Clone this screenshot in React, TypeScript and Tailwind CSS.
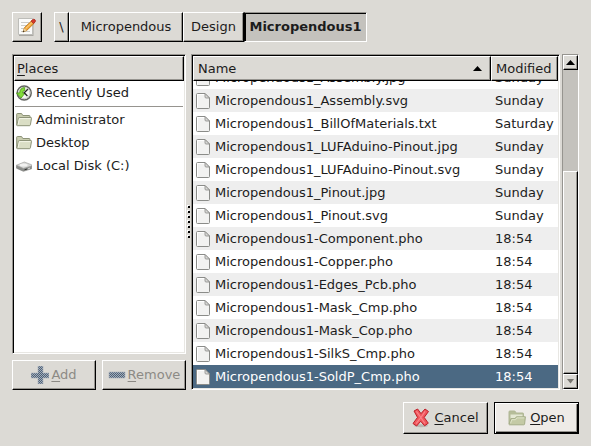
import { useLayoutEffect, useRef } from "react";

const raised =
  "border border-t-white border-l-white border-r-black border-b-black bg-[#dcdad5] shadow-[inset_-1px_-1px_0_#96948f]";

const sunken =
  "border border-t-[#96948f] border-l-[#96948f] border-r-white border-b-white p-px shadow-[inset_1px_1px_0_#000,inset_-1px_-1px_0_#e8e7e3]";

const files = [
  { name: "Micropendous1_Assembly.jpg", modified: "Sunday" },
  { name: "Micropendous1_Assembly.svg", modified: "Sunday" },
  { name: "Micropendous1_BillOfMaterials.txt", modified: "Saturday" },
  { name: "Micropendous1_LUFAduino-Pinout.jpg", modified: "Sunday" },
  { name: "Micropendous1_LUFAduino-Pinout.svg", modified: "Sunday" },
  { name: "Micropendous1_Pinout.jpg", modified: "Sunday" },
  { name: "Micropendous1_Pinout.svg", modified: "Sunday" },
  { name: "Micropendous1-Component.pho", modified: "18:54" },
  { name: "Micropendous1-Copper.pho", modified: "18:54" },
  { name: "Micropendous1-Edges_Pcb.pho", modified: "18:54" },
  { name: "Micropendous1-Mask_Cmp.pho", modified: "18:54" },
  { name: "Micropendous1-Mask_Cop.pho", modified: "18:54" },
  { name: "Micropendous1-SilkS_Cmp.pho", modified: "18:54" },
  { name: "Micropendous1-SoldP_Cmp.pho", modified: "18:54" },
];

function FileIcon() {
  return (
    <svg width="14" height="18" viewBox="0 0 14 18" className="shrink-0" aria-hidden="true">
      <path d="M.5 2.5q0-1 1-1H9l4.500 4.500v9.500q0 1-1 1h-11q-1 0-1-1z" fill="#f2f2f1" stroke="#8b8c89" strokeLinejoin="round" />
      <path d="M1.500 15.500v-13h7" fill="none" stroke="#fff" />
      <path d="M9 1.500v3.500q0 1 1 1h3.500z" fill="#d8d8d6" stroke="#8b8c89" strokeWidth=".8" strokeLinejoin="round" />
    </svg>
  );
}

function FolderIcon() {
  return (
    <svg width="16" height="16" viewBox="0 0 16 16" className="shrink-0" aria-hidden="true">
      <path d="M.7 13V2.200q0-.7.7-.7h4.200l1.200 2h6.500q.7 0 .7.7V6" fill="#c9cdaf" stroke="#8d9378" />
      <path d="M.8 13.500 2.400 6.400q.2-.9 1-.9h11.500q.7 0 .6.8l-1.100 6.500q-.2.9-1 .9H1.500q-.6 0-.7-.2z" fill="#dadec5" stroke="#8d9378" />
      <path d="M2.200 12.500 3.400 6.600h11" fill="none" stroke="#f3f5e6" />
    </svg>
  );
}

function OpenFolderIcon() {
  return (
    <svg width="18" height="18" viewBox="0 0 18 18" className="shrink-0" aria-hidden="true">
      <path d="M1 15V2.800q0-.8.8-.8h5l1.400 2h6.600q.7 0 .7.8V9" fill="#b6bd99" stroke="#b0b795" />
      <path d="M2.500 5.500h12v4h-12z" fill="#e5e8d4" />
      <path d="M1 15.500 3 9.600h4L8.400 7.800h9L16.600 15q-.1.800-.9.800H1.500z" fill="#c4caa5" stroke="#a5ad88" />
      <path d="M2.600 14.200 3.800 10.700h3.800L8.900 8.900h7.400" fill="none" stroke="#dfe4c9" />
    </svg>
  );
}

function RecentIcon() {
  return (
    <svg width="16" height="16" viewBox="0 0 16 16" className="shrink-0" aria-hidden="true">
      <circle cx="8.2" cy="8" r="7" fill="#f5f5f3" stroke="#62645f" strokeWidth="1.5" />
      <circle cx="8.2" cy="8" r="5.6" fill="none" stroke="#c9cac7" />
      <path d="M8.500 2.600Q3.800 3.100 3.700 8H.5l4.600 5 4-5H6.500q0-2.300 2.300-2.600z" fill="#83dc3c" stroke="#4b9d12" strokeWidth=".8" />
      <path d="m11.800 4.200-3.600 3.600 3.200 3.200" fill="none" stroke="#222" strokeWidth="1.3" />
    </svg>
  );
}

function DiskIcon() {
  return (
    <svg width="16" height="16" viewBox="0 0 16 16" className="shrink-0" aria-hidden="true">
      <path d="M.5 7.400v2.800l6.800 3.100 8.200-2.500V8z" fill="#8c8e8b" stroke="#787a77" strokeWidth=".6" />
      <path d="M.5 7.200 8.300 4l7.200 2.700v1.400L7.400 10.500z" fill="#d5d6d4" stroke="#9a9b98" strokeWidth=".6" />
      <ellipse cx="7.6" cy="7" rx="4" ry="1.5" fill="#f2f2f1" />
      <path d="m8.500 11.800 2.600-.8" stroke="#333" />
      <path d="m12.200 10.700 1.800-.6" stroke="#ddd" />
    </svg>
  );
}

function EditIcon() {
  return (
    <svg width="20" height="20" viewBox="0 0 20 20" aria-hidden="true">
      <path d="M2 3h14.500v16H2z" fill="#aaa8a3" />
      <path d="M1.500 1.500h14v16h-14z" fill="#fbfbfa" stroke="#bdbdb9" />
      <path d="M4 5.500h8M4 8.500h6M4 11.500h3M4 14.500h9" stroke="#cbcbc8" />
      <path d="m6 15 1.500-4.400 7.400-7.100 2.500 2.500-7.600 7.400z" fill="#f1a53b" stroke="#b67213" strokeWidth=".8" />
      <path d="m8.800 11.500 6.800-6.600" stroke="#ffd98d" />
      <path d="m14.100 4.200 1.700-1.600q1-.9 2.200.2 1 1.200.1 2.100l-1.600 1.700z" fill="#d53a2b" stroke="#a9281d" strokeWidth=".8" />
      <path d="m6 15 1.300-3.800 2.300 2.300z" fill="#e7cfa0" />
      <path d="m5.800 15.200.6-1.800 1.100 1.100z" fill="#222" />
    </svg>
  );
}

function CancelIcon() {
  return (
    <svg width="18" height="20" viewBox="0 0 18 20" className="shrink-0" aria-hidden="true">
      <ellipse cx="9" cy="17.8" rx="7" ry="1.5" fill="#b9b7b2" />
      <path d="M2 3 5.600 1 9 5.600 13 1l3.500 2.500-4.300 5.900 4.100 5.800-3.700 2.600L8.700 13.300 4.600 18 1 15.500l4.500-6.100z" fill="#f0575d" stroke="#bc2029" strokeLinejoin="round" />
      <path d="m4.400 3.300 4.500 6.200 4.200-6.100M8.800 9.600l-4.700 6.100M8.900 9.600l4.100 5.900" fill="none" stroke="#fb8388" strokeWidth="1.2" />
    </svg>
  );
}

function DitheredIcon({ kind }: { kind: "add" | "remove" }) {
  const id = `dither-${kind}`;
  return (
    <svg width="18" height="18" viewBox="0 0 18 18" className="shrink-0" aria-hidden="true">
      <defs>
        <pattern id={id} width="2" height="2" patternUnits="userSpaceOnUse">
          <path d="M0 0h2v2H0z" fill="#a3adb8" />
          <path d="M0 0h1v1H0zM1 1h1v1H1z" fill="#4c6078" />
        </pattern>
      </defs>
      <path
        d={kind === "add" ? "M7 0h5v7h6v5h-6v6H7v-6H0V7h7z" : "M1 6h16v6H1z"}
        fill={`url(#${id})`}
        stroke="#a8b0ba"
        strokeWidth=".6"
      />
    </svg>
  );
}

function Arrow({ down = false }: { down?: boolean }) {
  return (
    <svg width="9" height="5" viewBox="0 0 9 5" aria-hidden="true">
      <path d={down ? "M1 0h7L4.500 4.500z" : "M0 5 4.500 0 9 5z"} fill={down ? "#77756f" : "#000"} />
    </svg>
  );
}

function PathBar() {
  return (
    <nav aria-label="Folder path" className="flex h-[30px] gap-3">
      <button aria-label="Type a file name" className={`${raised} flex w-[30px] items-center justify-center`}>
        <EditIcon />
      </button>
      <div className="flex">
        <button className={`${raised} w-[15px]`}>\</button>
        <button className={`${raised} w-[114px]`}>Micropendous</button>
        <button className={`${raised} w-[61px]`}>Design</button>
        <button
          aria-current="page"
          className="w-[123px] border border-t-[#96948f] border-l-black border-r-white border-b-white bg-[#c4c2bd] font-bold shadow-[inset_1px_1px_0_#000]"
        >
          Micropendous1
        </button>
      </div>
    </nav>
  );
}

function Place({ icon, label }: { icon: React.ReactNode; label: string }) {
  return (
    <li>
      <button className="flex h-[23px] w-full items-center gap-1 px-0.5 text-left">
        {icon}
        {label}
      </button>
    </li>
  );
}

function Places() {
  return (
    <section className="flex w-[174px] shrink-0 flex-col gap-1.5">
      <div className={`${sunken} flex-1 bg-white`}>
        <h2 className={`${raised} h-[25px] px-0.5 leading-6`}>
          <u className="underline-offset-2">P</u>laces
        </h2>
        <ul>
          <Place icon={<RecentIcon />} label="Recently Used" />
          <li role="separator" className="mx-px mt-0.5 mb-px border-t border-[#96948f]" />
          <Place icon={<FolderIcon />} label="Administrator" />
          <Place icon={<FolderIcon />} label="Desktop" />
          <Place icon={<DiskIcon />} label="Local Disk (C:)" />
        </ul>
      </div>
      <div className="grid h-[30px] grid-cols-2 gap-1.5 text-[#8c8a85] [text-shadow:1px_1px_0_#fff]">
        <button disabled className={`${raised} flex items-center justify-center gap-0.5`}>
          <DitheredIcon kind="add" />
          <span><u className="underline-offset-2">A</u>dd</span>
        </button>
        <button disabled className={`${raised} flex items-center justify-center gap-0.5`}>
          <DitheredIcon kind="remove" />
          <span><u className="underline-offset-2">R</u>emove</span>
        </button>
      </div>
    </section>
  );
}

function FileTable() {
  const pane = useRef<HTMLDivElement>(null);
  useLayoutEffect(() => {
    if (pane.current) pane.current.scrollTop = pane.current.scrollHeight;
  }, []);
  return (
    <div className={`${sunken} min-w-0 flex-1`}>
      <div ref={pane} className="h-[332px] overflow-hidden bg-white">
        <table className="w-full table-fixed border-separate border-spacing-0 text-left">
          <thead className="sticky top-0 z-10">
            <tr className="h-[25px]">
              <th className={`${raised} px-1 py-0 font-normal`}>
                <div className="flex items-center justify-between pr-1">
                  Name
                  <Arrow />
                </div>
              </th>
              <th className={`${raised} w-[67px] px-1 py-0 font-normal`}>Modified</th>
            </tr>
          </thead>
          <tbody>
            {files.map((file, i) => {
              const selected = i === files.length - 1;
              return (
                <tr
                  key={file.name}
                  aria-selected={selected}
                  className={`h-[23px] ${selected ? "bg-[#4b6983] text-white" : i % 2 ? "bg-[#eeeeee]" : "bg-white"}`}
                >
                  <td className="p-0 pl-[3px]">
                    <div className="flex items-center gap-[5px]">
                      <FileIcon />
                      {file.name}
                    </div>
                  </td>
                  <td className="p-0 pl-1">{file.modified}</td>
                </tr>
              );
            })}
          </tbody>
        </table>
      </div>
    </div>
  );
}

function ScrollBar() {
  return (
    <div className="ml-0.5 flex w-[17px] shrink-0 flex-col border border-t-[#96948f] border-l-[#96948f] border-r-white border-b-white bg-[#c4c2bd]">
      <button aria-label="Scroll up" className={`${raised} flex h-[15px] items-center justify-center`}>
        <Arrow />
      </button>
      <div className="flex flex-1 flex-col justify-end">
        <div className={`${raised} h-2/3`} />
      </div>
      <button aria-label="Scroll down" className={`${raised} flex h-[15px] items-center justify-center`}>
        <Arrow down />
      </button>
    </div>
  );
}

export default function App() {
  return (
    <main className="flex min-h-screen flex-col gap-3 bg-[#dcdad5] p-3 font-['DejaVu_Sans',sans-serif] text-[13px] leading-4 text-[#1c1c1c]">
      <PathBar />
      <div className="flex">
        <Places />
        <div role="separator" aria-orientation="vertical" className="flex w-[5px] shrink-0 flex-col items-center justify-center gap-[3px]">
          {Array.from({ length: 7 }, (_, i) => (
            <span key={i} className="size-0.5 bg-black shadow-[-1px_-1px_0_#fff]" />
          ))}
        </div>
        <FileTable />
        <ScrollBar />
      </div>
      <footer className="flex h-8 justify-end gap-1.5">
        <button className={`${raised} flex w-[85px] items-center justify-center gap-1`}>
          <CancelIcon />
          <span><u className="underline-offset-2">C</u>ancel</span>
        </button>
        <button className="flex w-[85px] items-center justify-center gap-1 border border-black bg-[#eeebe7] shadow-[inset_1px_1px_0_#fff,inset_-1px_-1px_0_#000,inset_-2px_-2px_0_#96948f]">
          <OpenFolderIcon />
          <span><u className="underline-offset-2">O</u>pen</span>
        </button>
      </footer>
    </main>
  );
}
